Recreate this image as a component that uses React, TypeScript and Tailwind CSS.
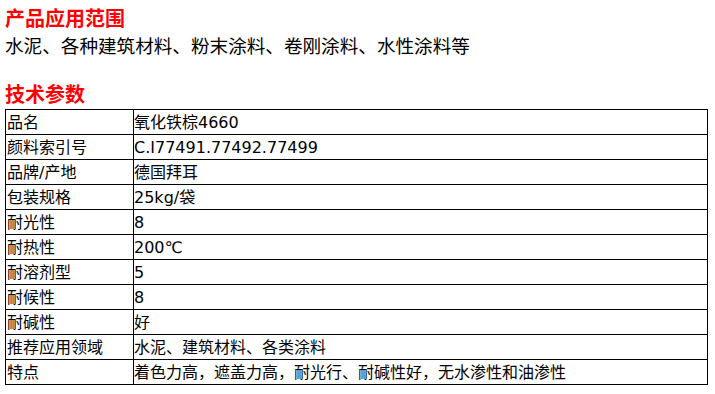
const rows: [string, string][] = [
  ["品名", "氧化铁棕4660"],
  ["颜料索引号", "C.I77491.77492.77499"],
  ["品牌/产地", "德国拜耳"],
  ["包装规格", "25kg/袋"],
  ["耐光性", "8"],
  ["耐热性", "200℃"],
  ["耐溶剂型", "5"],
  ["耐候性", "8"],
  ["耐碱性", "好"],
  ["推荐应用领域", "水泥、建筑材料、各类涂料"],
  ["特点", "着色力高，遮盖力高，耐光行、耐碱性好，无水渗性和油渗性"],
];

export default function App() {
  return (
    <div
      className="bg-white text-black pl-[5px] pt-[5px] w-[715px] h-[394px] overflow-hidden"
      style={{ fontFamily: '"DejaVu Sans", "Noto Sans CJK SC", sans-serif' }}
    >
      <h2 className="text-[20px] leading-[28px] font-bold text-[#ff0000]">产品应用范围</h2>
      <p className="text-[18.6px] leading-[28px]">水泥、各种建筑材料、粉末涂料、卷刚涂料、水性涂料等</p>
      <h2 className="mt-[20px] text-[20px] leading-[28px] font-bold text-[#ff0000]">技术参数</h2>
      <table className="border-collapse w-[703px] text-[16px]">
        <tbody>
          {rows.map(([k, v]) => (
            <tr key={k} className="h-[25px]">
              <td className="border border-black w-[128px] px-[1px] pt-[2px] leading-[22px] align-middle whitespace-nowrap">
                {k}
              </td>
              <td className="border border-black px-0 pt-[2px] leading-[22px] align-middle whitespace-nowrap">
                {v}
              </td>
            </tr>
          ))}
        </tbody>
      </table>
    </div>
  );
}
